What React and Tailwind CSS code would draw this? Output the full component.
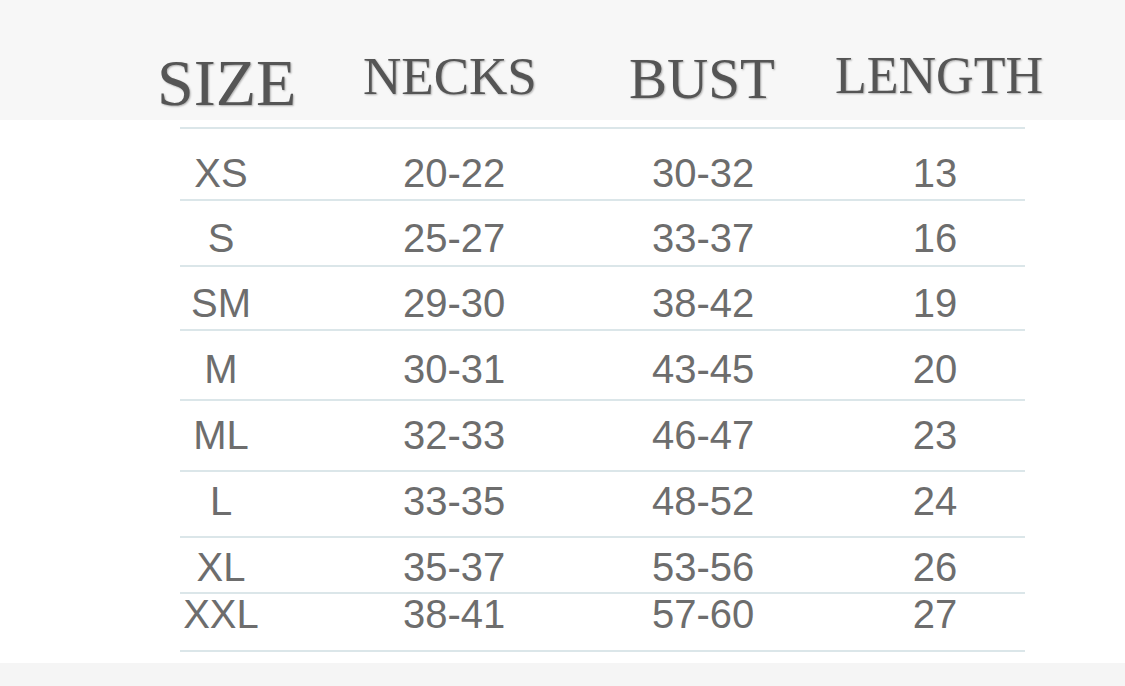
import React from "react";

// Size chart rows: h = distance between divider lines, pt = text offset in the row
const rows = [
  { size: "XS", necks: "20-22", bust: "30-32", length: "13", h: "h-[72px]", pt: "pt-[24px]" },
  { size: "S", necks: "25-27", bust: "33-37", length: "16", h: "h-[66px]", pt: "pt-[17px]" },
  { size: "SM", necks: "29-30", bust: "38-42", length: "19", h: "h-[64px]", pt: "pt-[16px]" },
  { size: "M", necks: "30-31", bust: "43-45", length: "20", h: "h-[70px]", pt: "pt-[18px]" },
  { size: "ML", necks: "32-33", bust: "46-47", length: "23", h: "h-[71px]", pt: "pt-[14px]" },
  { size: "L", necks: "33-35", bust: "48-52", length: "24", h: "h-[66px]", pt: "pt-[9px]" },
  { size: "XL", necks: "35-37", bust: "53-56", length: "26", h: "h-[56px]", pt: "pt-[9px]" },
  { size: "XXL", necks: "38-41", bust: "57-60", length: "27", h: "h-[58px]", pt: "pt-[0px]" },
];

export default function App() {
  return (
    <div className="w-[1125px] h-[686px] flex flex-col bg-white overflow-hidden">
      {/* Header band */}
      <div className="h-[120px] shrink-0 bg-[#f7f7f7] flex items-start pt-[50px] pl-[157px] font-['Liberation_Serif',serif] text-[#555555] leading-none [text-shadow:1px_1px_2px_rgba(0,0,0,0.3)]">
        <div className="w-[206px] text-[66px]">SIZE</div>
        <div className="w-[266px] text-[53px]">NECKS</div>
        <div className="w-[206px] text-[57px]">BUST</div>
        <div className="text-[52px]">LENGTH</div>
      </div>

      {/* Table */}
      <div className="flex-1 pt-[7px]">
        <div className="ml-[180px] w-[845px] border-t-2 border-[#dbe6e9] font-['Liberation_Sans',Arial,sans-serif] text-[40px] leading-[40px] text-[#6d6d6d]">
          {rows.map((r) => (
            <div
              key={r.size}
              className={`flex items-start box-border border-b-2 border-[#dbe6e9] ${r.h} ${r.pt}`}
            >
              <div className="w-[82px] text-center">{r.size}</div>
              <div className="ml-[141px] w-[249px]">{r.necks}</div>
              <div className="w-[218px]">{r.bust}</div>
              <div className="w-[130px] text-center">{r.length}</div>
            </div>
          ))}
        </div>
      </div>

      {/* Bottom band */}
      <div className="h-[23px] shrink-0 bg-[#f5f5f5]" />
    </div>
  );
}
